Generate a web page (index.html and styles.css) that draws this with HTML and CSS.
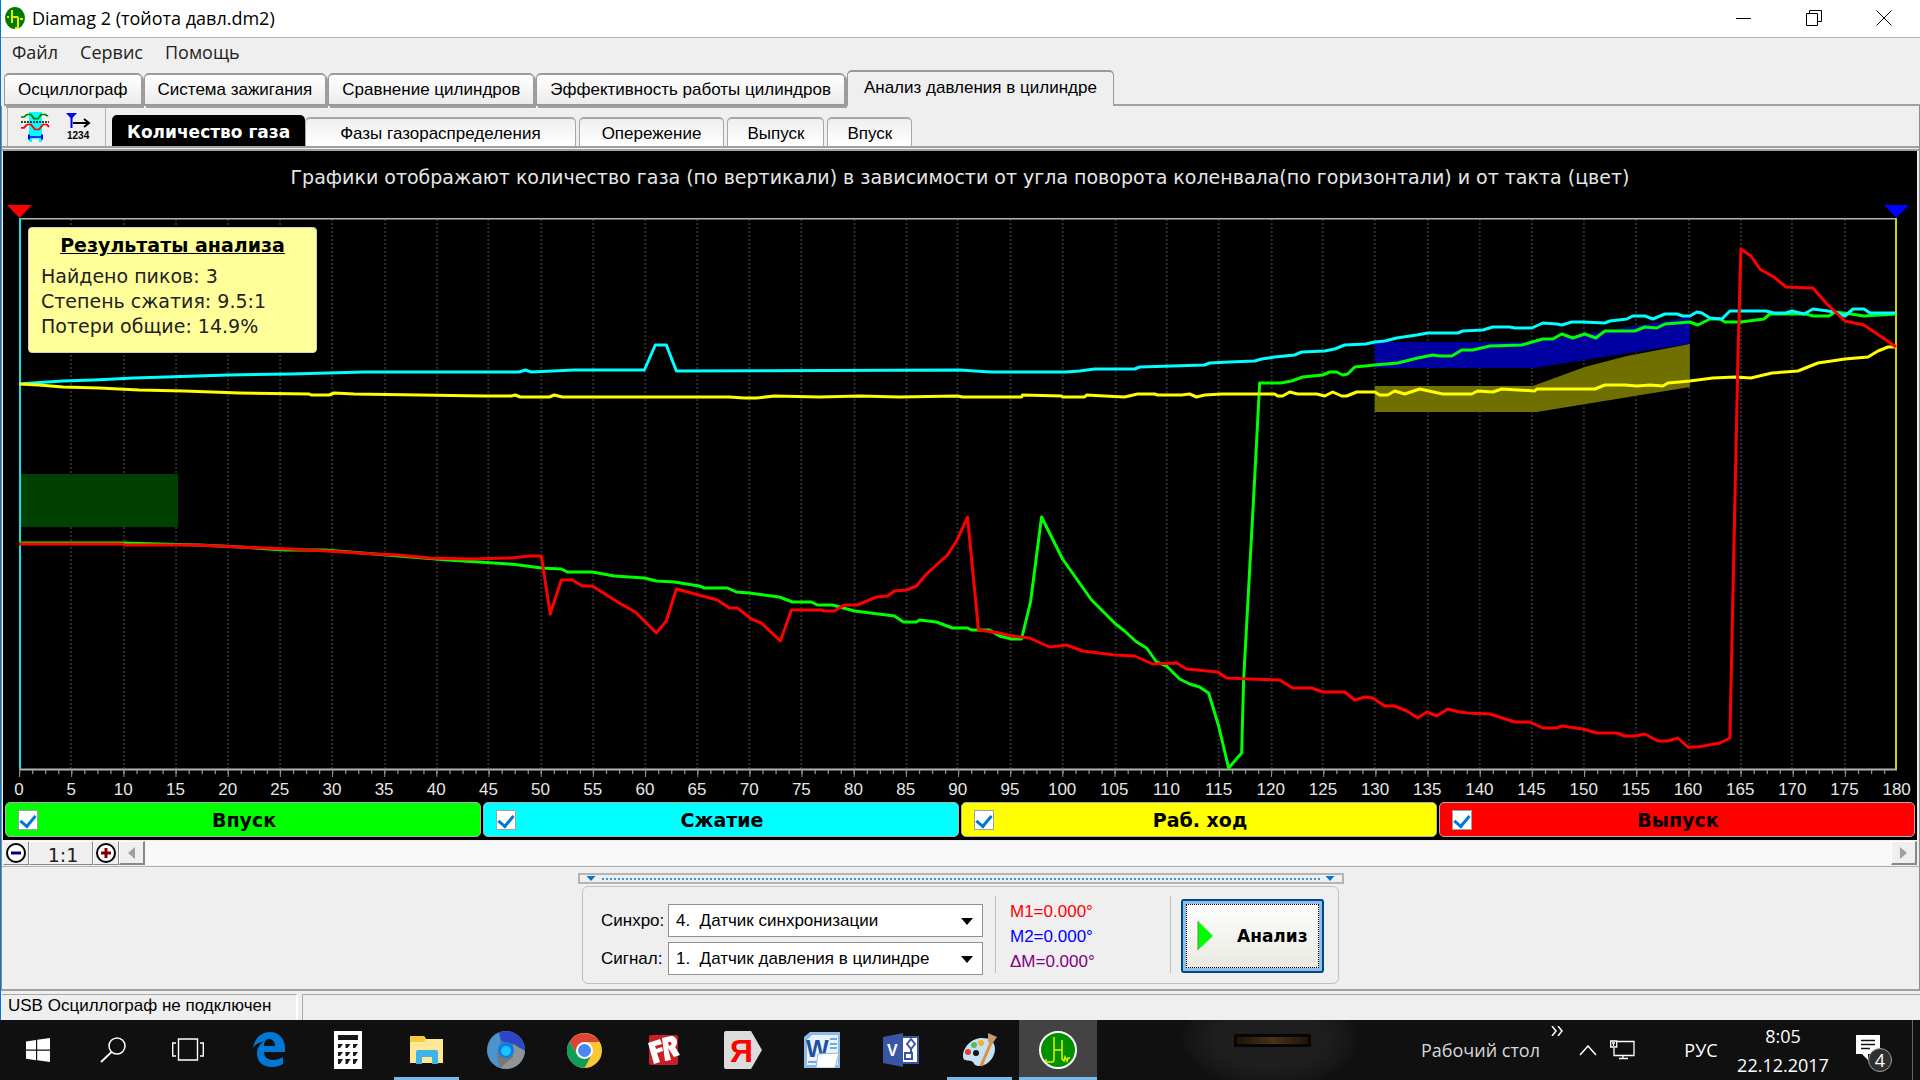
FILE: index.html
```html
<!DOCTYPE html>
<html lang="ru">
<head>
<meta charset="utf-8">
<title>Diamag 2 (тойота давл.dm2)</title>
<link rel="stylesheet" href="styles.css">
</head>
<body>
<div class="window">
  <header class="titlebar">
    <svg class="app-icon" width="22" height="24" viewBox="0 0 22 24"><ellipse cx="11" cy="12" rx="10" ry="11" fill="#007d00"/><path d="M3 11h2M8 4v13M8 11h5q1 0 1 1v10h-3M16 13h3" fill="none" stroke="#e8f000" stroke-width="2"/></svg>
    <h1 class="title">Diamag 2 (тойота давл.dm2)</h1>
    <div class="window-buttons">
      <button type="button" aria-label="Свернуть"><svg width="16" height="18" viewBox="0 0 16 18"><path d="M0 9.5h15" stroke="#000"/></svg></button>
      <button type="button" aria-label="Восстановить"><svg width="16" height="18" viewBox="0 0 16 18"><path d="M.5 4.500h11v12h-11zM3.500 4V1.500h12v11H12" fill="none" stroke="#000"/></svg></button>
      <button type="button" aria-label="Закрыть"><svg width="16" height="18" viewBox="0 0 16 18"><path d="M.5 1.500l15 15M15.500 1.500l-15 15" stroke="#000"/></svg></button>
    </div>
  </header>

  <nav class="menubar">
    <button type="button">Файл</button>
    <button type="button">Сервис</button>
    <button type="button">Помощь</button>
  </nav>

  <nav class="tabs">
    <button type="button" class="tab">Осциллограф</button>
    <button type="button" class="tab">Система зажигания</button>
    <button type="button" class="tab">Сравнение цилиндров</button>
    <button type="button" class="tab">Эффективность работы цилиндров</button>
    <button type="button" class="tab tab-active">Анализ давления в цилиндре</button>
    <div class="tabs-rest"></div>
  </nav>

  <main class="page">
    <div class="toolbar">
      <div class="tools">
        <button type="button" aria-label="Сравнение сигналов"><svg width="30" height="30" viewBox="0 0 30 36" preserveAspectRatio="none"><path d="M9 0h13v36h-3v-4H12v4H9z" fill="#0ff"/><path d="M1 6h3l3-3h4l3 5h4l3-5h4l3 2" fill="none" stroke="#008000" stroke-width="2"/><path d="M1 12h28" stroke="#000" stroke-width="2" stroke-dasharray="2 1"/><path d="M1 19h3l3-4h4l4 6h4l4-6h4l2 3" fill="none" stroke="red" stroke-width="2"/><path d="M9 30h13M9 27v6M22 27v6" stroke="#00f" stroke-width="2"/></svg></button>
        <button type="button" aria-label="Нумерация импульсов"><svg width="26" height="32" viewBox="0 0 26 32"><path d="M0 1h11l-5.500 6z" fill="#00f"/><path d="M5.500 5v11" stroke="#00f" stroke-width="2"/><path d="M7 11h15M18 7l5 4-5 4" fill="none" stroke="#000" stroke-width="2"/><text x="1" y="27" class="icon-digits">1234</text></svg></button>
      </div>
      <nav class="subtabs">
        <button type="button" class="subtab subtab-active">Количество газа</button>
        <button type="button" class="subtab subtab-wide">Фазы газораспределения</button>
        <button type="button" class="subtab subtab-medium">Опережение</button>
        <button type="button" class="subtab">Выпуск</button>
        <button type="button" class="subtab">Впуск</button>
      </nav>
    </div>

    <section class="chart">
      <p class="chart-caption">Графики отображают количество газа (по вертикали) в зависимости от угла поворота коленвала(по горизонтали) и от такта (цвет)</p>
      <div class="markers"><i class="marker marker-red"></i><i class="marker marker-blue"></i></div>
      <div class="plot">
        <svg class="plot-lines" viewBox="20 219 1877 559" preserveAspectRatio="none">
          <path class="grid" d="M72 220v550M125 220v550M177 220v550M229 220v550M281 220v550M333 220v550M386 220v550M438 220v550M489 220v550M542 220v550M594 220v550M646 220v550M698 220v550M750 220v550M802 220v550M855 220v550M907 220v550M958 220v550M1011 220v550M1063 220v550M1116 220v550M1167 220v550M1219 220v550M1272 220v550M1323 220v550M1375 220v550M1428 220v550M1480 220v550M1532 220v550M1584 220v550M1636 220v550M1689 220v550M1741 220v550M1792 220v550M1845 220v550"/>
          <path fill="#004000" d="M20 475h159v53H20z"/>
          <path fill="#0000a0" d="M1375 343h159l51-8 105-17v27l-55 8-50 8-50 8h-160z"/>
          <path fill="#707000" d="M1375 387h158l52-19 42-11 63-12v43l-153 25h-162z"/>
          <path class="frame" d="M20 219.500h1877M20 770.500h1877" />
          <path class="tick" stroke-width="4" pathLength="1440" stroke-dasharray="1 9" d="M20 773h1877"/>
          <path class="tick" stroke-width="8" pathLength="1800" stroke-dasharray="1 49" d="M20 774h1877"/>
          <path stroke="#00e5ee" stroke-width="2" d="M21 219v551"/>
          <path stroke="#d8d000" stroke-width="2" d="M1896 219v551"/>
          <polyline class="series" stroke="#0f0" points="20,544 124,544 160,545 200,546 241,548 286,551 326,551 400,557 449,561 510,565 520,566 542,569 562,570 568,573 593,573 615,577 645,579 657,582 675,583 700,587 705,589 728,589 737,593 750,594 780,598 793,603 812,603 818,606 833,606 855,612 895,617 904,623 917,623 920,621 937,623 953,629 968,629 972,631 990,631 1000,637 1012,640 1022,640 1031,603 1042,518 1063,560 1092,601 1116,625 1125,632 1137,643 1147,649 1157,663 1167,667 1180,680 1190,685 1200,688 1209,694 1219,727 1229,769 1242,754 1244,680 1255,480 1260,384 1281,384 1292,382 1303,378 1323,376 1330,373 1337,373 1343,376 1348,375 1355,368 1365,367 1375,366 1398,364 1418,359 1433,356 1440,357 1452,357 1462,351 1473,351 1490,347 1522,346 1543,340 1553,340 1562,335 1573,339 1585,335 1596,339 1605,332 1635,332 1645,328 1657,329 1665,325 1690,323 1698,326 1710,320 1720,320 1725,323 1741,323 1764,320 1770,315 1806,315 1813,317 1829,317 1835,313 1851,315 1864,317 1896,315"/>
          <polyline class="series" stroke="#0ff" points="20,385 33,384 64,382 95,381 135,379 167,378 229,376 292,375 365,373 520,373 526,371 532,373 575,371 645,371 656,346 667,346 677,372 960,371 991,373 1066,373 1080,372 1095,370 1135,370 1140,368 1172,367 1205,366 1210,364 1230,363 1255,362 1262,360 1275,358 1295,356 1302,353 1325,352 1335,350 1345,346 1366,345 1375,343 1385,342 1397,339 1417,336 1428,334 1458,334 1463,332 1483,331 1493,328 1510,328 1515,329 1532,329 1543,324 1557,325 1562,326 1572,323 1583,323 1605,324 1610,322 1627,320 1633,317 1645,317 1653,320 1665,315 1677,315 1683,317 1690,317 1697,313 1702,314 1710,319 1722,320 1730,312 1766,312 1774,314 1786,314 1792,312 1804,315 1813,310 1835,313 1845,317 1853,310 1864,310 1870,314 1896,314"/>
          <polyline class="series" stroke="#ff0" points="20,385 40,386 64,388 100,389 140,391 185,392 240,394 310,395 312,396 330,396 335,394 355,395 485,397 512,397 516,396 521,398 550,398 555,396 563,398 730,398 745,399 757,399 775,397 820,398 860,397 900,398 958,397 963,398 1022,398 1023,396 1062,397 1063,398 1085,398 1087,396 1105,397 1125,398 1138,395 1155,395 1158,396 1182,396 1190,395 1197,398 1205,396 1223,395 1275,395 1278,397 1283,397 1290,393 1298,395 1317,395 1325,397 1333,393 1342,397 1347,397 1357,393 1375,393 1380,396 1388,396 1395,392 1405,395 1420,390 1443,395 1472,395 1478,392 1493,393 1502,390 1535,392 1537,390 1595,390 1605,386 1625,386 1637,387 1650,386 1663,387 1668,384 1690,382 1713,379 1735,378 1751,379 1772,374 1798,372 1818,364 1845,360 1868,358 1878,352 1888,348 1896,348"/>
          <polyline class="series" stroke="red" points="20,545 124,545 125,546 197,546 240,548 290,550 345,553 375,555 400,556 430,559 470,560 512,559 530,557 542,557 551,615 562,581 573,581 583,587 593,587 620,604 636,613 657,634 667,622 677,590 718,601 730,609 738,609 752,620 762,624 781,642 792,611 822,611 825,612 835,612 845,606 858,606 877,598 888,597 895,592 907,591 917,587 927,575 948,556 957,542 968,518 979,631 1000,634 1012,637 1030,639 1050,648 1067,646 1083,652 1115,656 1135,657 1153,665 1177,664 1187,670 1218,673 1227,679 1250,680 1280,681 1293,689 1312,689 1323,693 1345,693 1355,701 1365,698 1373,699 1385,707 1395,707 1407,712 1418,719 1427,713 1437,717 1448,710 1460,713 1468,714 1490,715 1515,723 1530,723 1543,729 1557,729 1562,727 1583,730 1597,734 1617,734 1625,737 1635,737 1645,735 1658,742 1668,742 1678,739 1688,748 1698,748 1720,744 1730,739 1738,360 1741,250 1751,257 1760,270 1774,278 1786,288 1813,289 1827,305 1845,322 1864,326 1892,345 1896,348"/>
        </svg>
        <aside class="results">
          <h2>Результаты анализа</h2>
          <p>Найдено пиков: 3</p>
          <p>Степень сжатия: 9.5:1</p>
          <p>Потери общие: 14.9%</p>
        </aside>
      </div>
      <div class="scale">
        <span>0</span><span>5</span><span>10</span><span>15</span><span>20</span><span>25</span><span>30</span><span>35</span><span>40</span><span>45</span><span>50</span><span>55</span><span>60</span><span>65</span><span>70</span><span>75</span><span>80</span><span>85</span><span>90</span><span>95</span><span>100</span><span>105</span><span>110</span><span>115</span><span>120</span><span>125</span><span>130</span><span>135</span><span>140</span><span>145</span><span>150</span><span>155</span><span>160</span><span>165</span><span>170</span><span>175</span><span>180</span>
      </div>
      <div class="strokes">
        <label class="stroke stroke-intake"><input type="checkbox" checked><span>Впуск</span></label>
        <label class="stroke stroke-compression"><input type="checkbox" checked><span>Сжатие</span></label>
        <label class="stroke stroke-power"><input type="checkbox" checked><span>Раб. ход</span></label>
        <label class="stroke stroke-exhaust"><input type="checkbox" checked><span>Выпуск</span></label>
      </div>
    </section>

    <div class="zoombar">
      <button type="button" class="zoom-button" aria-label="Уменьшить"><svg width="20" height="20" viewBox="0 0 20 20"><circle cx="10" cy="10" r="9" fill="#fff" stroke="#000" stroke-width="2"/><path d="M5 10h10" stroke="#000080" stroke-width="3"/></svg></button>
      <button type="button" class="zoom-button zoom-reset">1:1</button>
      <button type="button" class="zoom-button" aria-label="Увеличить"><svg width="20" height="20" viewBox="0 0 20 20"><circle cx="10" cy="10" r="9" fill="#fff" stroke="#000" stroke-width="2"/><path d="M5 10h10M10 5v10" stroke="#800000" stroke-width="3"/></svg></button>
      <button type="button" class="scroll-button" aria-label="Влево"><svg width="7" height="12" viewBox="0 0 7 12"><path d="M7 0v12L0 6z" fill="#a0a0a0"/></svg></button>
      <div class="scroll-track"></div>
      <button type="button" class="scroll-button" aria-label="Вправо"><svg width="7" height="12" viewBox="0 0 7 12"><path d="M0 0v12l7-6z" fill="#a0a0a0"/></svg></button>
    </div>

    <section class="controls">
      <div class="splitter"><i></i><b></b><i></i></div>
      <div class="group">
        <div class="sources">
          <label for="sync">Синхро:</label>
          <div class="combo"><select id="sync"><option>4.&nbsp; Датчик синхронизации</option></select><i></i></div>
          <label for="signal">Сигнал:</label>
          <div class="combo"><select id="signal"><option>1.&nbsp; Датчик давления в цилиндре</option></select><i></i></div>
        </div>
        <div class="readouts">
          <span class="m1">M1=0.000°</span>
          <span class="m2">M2=0.000°</span>
          <span class="dm">ΔM=0.000°</span>
        </div>
        <button type="button" class="analyze"><svg width="16" height="30" viewBox="0 0 16 30"><path d="M1 0v29l15-14z" fill="#0f0"/><path d="M1 0v29" stroke="#5a8a5a"/></svg><span>Анализ</span></button>
      </div>
    </section>
  </main>

  <footer class="statusbar">
    <span class="status-text">USB Осциллограф не подключен</span>
    <span class="status-rest"></span>
  </footer>
</div>

<div class="taskbar">
  <button type="button" class="sys" aria-label="Пуск"><svg width="24" height="24" viewBox="0 0 24 24"><path d="M0 3.500l10-1.500v9.500H0zM11.200 1.800L24 0v11.500H11.200zM0 12.700h10v9.500L0 20.800zM11.200 12.700H24V24l-12.800-1.800z" fill="#fff"/></svg></button>
  <button type="button" class="sys" aria-label="Поиск"><svg width="26" height="26" viewBox="0 0 26 26"><circle cx="17" cy="9" r="8" fill="none" stroke="#fff" stroke-width="1.500"/><path d="M11.500 15L1 25" stroke="#fff" stroke-width="1.800"/></svg></button>
  <button type="button" class="sys" aria-label="Представление задач"><svg width="32" height="24" viewBox="0 0 32 24"><path d="M6.500 1h19v21h-19zM4 5H.7v13H4M28 5h3.300v13H28" fill="none" stroke="#fff" stroke-width="1.400"/></svg></button>
  <div class="apps">
    <button type="button" class="app" aria-label="Edge"><svg width="34" height="36" viewBox="0 0 34 36"><path d="M1 16C3 5 10 0 18 0c9 0 15 7 15 16v4H12c0 6 5 8 9 8 4 0 7-1 10-3v7c-3 2-7 3-11 3C11 35 5 30 5 21c0-5 3-9 7-12-5 1-9 4-11 7zm11-2h11c0-5-3-7-6-7-3 0-5 3-5 7z" fill="#0078d7"/></svg></button>
    <button type="button" class="app" aria-label="Калькулятор"><svg width="28" height="38" viewBox="0 0 28 38"><path d="M0 0h28v38H0z" fill="#fff"/><path d="M4 4h20v5H4z" fill="#181818"/><path d="M4 13h5l-3 4H4zM11.500 13h5l-3 4h-2zM19 13h5l-3 4h-2zM4 21h5l-3 4H4zM11.500 21h5l-3 4h-2zM19 21h5l-3 4h-2zM4 28h5l-3 5H4zM11.500 28h5l-3 5h-2zM19 28h5l-3 5h-2z" fill="#181818"/></svg></button>
    <button type="button" class="app app-running" aria-label="Проводник"><svg width="34" height="30" viewBox="0 0 34 30"><path d="M0 1h14l2 3h17v24H0z" fill="#ffe793"/><path d="M0 1h14l2 3-2 3H0z" fill="#f7c93c"/><path d="M6 29V17q0-2 2-2h18q2 0 2 2v12h-6v-7H12v7z" fill="#3cb4e7"/></svg></button>
    <button type="button" class="app" aria-label="Chromium"><svg width="38" height="38" viewBox="0 0 38 38"><circle cx="19" cy="19" r="19" fill="#777"/><path d="M12 1.500A19 19 0 0 0 13 37L10 24 14 10z" fill="#4b94cf"/><path d="M12 1.500A19 19 0 0 1 38 20L26 13 14 10z" fill="#2c48c8"/><path d="M38 20L26 13v13L13 37A19 19 0 0 0 38 20z" fill="#8f9499"/><circle cx="19" cy="19" r="8" fill="#0a7de8"/><circle cx="19" cy="20" r="5" fill="#19c4ff"/></svg></button>
    <button type="button" class="app" aria-label="Chrome"><svg width="35" height="35" viewBox="0 0 35 35"><circle cx="17.500" cy="17.500" r="17.500" fill="#fbc834"/><path d="M2.500 8.500a17.500 17.500 0 0 1 30 .5H17.500L10 21z" fill="#dc4437"/><path d="M2.500 8.500a17.500 17.500 0 0 0 15 26.500l7-13h-14z" fill="#0f9d58"/><circle cx="17.500" cy="17.500" r="8.500" fill="#fff"/><circle cx="17.500" cy="17.500" r="6.500" fill="#4b87f0"/></svg></button>
    <button type="button" class="app" aria-label="FineReader"><svg width="34" height="32" viewBox="0 0 34 32"><rect x="2" y="1" width="29" height="30" rx="2" fill="#c8202a"/><path d="M1 9l12-4 2 5-7 2 1 3 6-2 1 4-6 2 3 9-6 2zM15 4l9-2c6 0 8 7 4 11l5 8-6 2-6-9 3 12-6 1zm6 4l1 4c4-1 3-5-1-4z" fill="#fff"/></svg></button>
    <button type="button" class="app" aria-label="Яндекс"><svg width="38" height="38" viewBox="0 0 38 38"><path d="M2 0h25l11 19-11 19H2q-2 0-2-2V2q0-2 2-2z" fill="#dcdcdc"/><text x="6" y="31" class="logo-ya">Я</text></svg></button>
    <button type="button" class="app" aria-label="Word"><svg width="36" height="36" viewBox="0 0 36 36"><path d="M6 0h30v36H0V5z" fill="#8dbbe9"/><path d="M8 3h26v30H3V8z" fill="#e9f3fd"/><path d="M26 7h7M26 12h7M26 16h7M4 30h14" stroke="#7ba6d8" stroke-width="2"/><text x="2" y="25" class="logo-word">W</text><path d="M14 22l21-1-4 15H12z" fill="#fff" stroke="#9db4d0"/></svg></button>
    <button type="button" class="app" aria-label="Visio"><svg width="36" height="34" viewBox="0 0 36 34"><path d="M18 4h17v26H18z" fill="#fff" stroke="#3955a3" stroke-width="2"/><path d="M28 6l4 5-4 5-4-5zM22 20h7v6h-7zM28 16v4" fill="none" stroke="#3955a3" stroke-width="2"/><path d="M0 4l20-4v34L0 30z" fill="#3955a3"/><text x="4" y="23" class="logo-visio">V</text></svg></button>
    <button type="button" class="app app-running" aria-label="Paint"><svg width="36" height="36" viewBox="0 0 36 36"><path d="M20 6C9 6 1 16 1 24c0 6 5 4 8 5 4 1 2 5 8 5 9 0 16-9 16-17S27 6 20 6z" fill="#c4e2f3"/><circle cx="6" cy="20" r="3" fill="#e03c31"/><circle cx="12" cy="13" r="3" fill="#59b95b"/><circle cx="19" cy="11" r="3" fill="#f2b134"/><circle cx="14" cy="21" r="3" fill="#111"/><path d="M32 4L19 34" stroke="#e48d3a" stroke-width="3"/><path d="M26 1l9 4-5 7-4-2z" fill="#c79a6c"/></svg></button>
    <button type="button" class="app app-running app-active" aria-label="Diamag"><svg width="38" height="38" viewBox="0 0 38 38"><circle cx="19" cy="19" r="18" fill="#009000" stroke="#fff" stroke-width="2"/><path d="M7 28v3h7l1-2V6M15 19h8M23 9v19l2 2 1-4 2 4 1-3h2" fill="none" stroke="#e6f000" stroke-width="1.500"/></svg></button>
  </div>
  <div class="wallpaper"><i></i></div>
  <div class="tray">
    <button type="button" class="desktop-label">Рабочий стол</button>
    <button type="button" class="more" aria-label="Ещё"><svg width="12" height="10" viewBox="0 0 12 10"><path d="M1 0l4 5-4 5M7 0l4 5-4 5" fill="none" stroke="#fff" stroke-width="1.500"/></svg></button>
    <button type="button" aria-label="Скрытые значки"><svg width="18" height="11" viewBox="0 0 18 11"><path d="M1 10l8-9 8 9" fill="none" stroke="#fff" stroke-width="1.500"/></svg></button>
    <button type="button" class="network" aria-label="Сеть"><svg width="25" height="20" viewBox="0 0 25 20"><path d="M7 1.500h17v14H4V8M13 16v3M9 18.500h9M.7 1h6v6h-6zM2 3h3M3.500 3v3" fill="none" stroke="#fff" stroke-width="1.300"/></svg></button>
    <button type="button" class="lang">РУС</button>
    <button type="button" class="clock"><span>8:05</span><span>22.12.2017</span></button>
    <button type="button" class="notices" aria-label="Уведомления"><svg width="24" height="26" viewBox="0 0 24 26"><path d="M0 0h24v19H12l0 6-6-6H0z" fill="#fff"/><path d="M5 5.500h14M5 9.500h14M5 13.500h9" stroke="#111" stroke-width="1.300"/></svg><span class="badge">4</span></button>
  </div>
</div>
</body>
</html>
```
FILE: styles.css
```css
* { box-sizing: border-box; }

body {
  margin: 0;
  min-height: 100vh;
  display: flex;
  flex-direction: column;
  background: #efefef;
  color: #000;
  font: 17px/20px "Liberation Sans", sans-serif;
}

button {
  margin: 0;
  padding: 0;
  border: 0;
  background: none;
  color: inherit;
  font: inherit;
}

svg { display: block; }
h1, h2, p { margin: 0; font-weight: normal; }

.window {
  flex: 1;
  display: flex;
  flex-direction: column;
  border-left: 1px solid #0078d7;
}

/* Title bar and menu */
.titlebar {
  display: flex;
  align-items: center;
  height: 38px;
  padding: 0 18px 2px 3px;
  background: #fff;
  border-bottom: 1px solid #b4b4b4;
}
.title {
  flex: 1;
  margin-left: 6px;
  font: 18px/24px "Open Sans", sans-serif;
}
.window-buttons { display: flex; gap: 54px; padding-right: 10px; }

.menubar {
  display: flex;
  gap: 22px;
  height: 32px;
  padding: 1px 11px 5px;
  font: 18px/24px "Open Sans", sans-serif;
  color: #222;
}

/* Main tabs */
.tabs {
  display: flex;
  align-items: flex-end;
  height: 36px;
  padding-left: 3px;
}
.tab {
  height: 33px;
  margin-right: 2px;
  padding: 0 13px;
  border: 2px solid #9a9a9a;
  border-width: 2px 1px 2px 1px;
  border-radius: 5px 5px 0 0;
  background: linear-gradient(#fff, #ececec);
  white-space: nowrap;
  box-shadow: 2px 2px 0 #9f9f9f;
}
.tab-active {
  height: 36px;
  margin: 0;
  padding: 0 16px 2px;
  border-bottom: 0;
  background: #efefef;
  box-shadow: none;
}
.tabs-rest { flex: 1; border-bottom: 2px solid #a0a0a0; }

.page {
  flex: 1;
  display: flex;
  flex-direction: column;
  border: 1px solid #8c8c8c;
  border-top: 0;
  border-bottom: 2px solid #a0a0a0;
}

/* Toolbar and inner tabs */
.toolbar {
  display: flex;
  align-items: stretch;
  height: 45px;
  padding: 2px 0 0 5px;
  border-bottom: 5px double #a0a0a0;
}
.tools {
  display: flex;
  gap: 16px;
  width: 99px;
  padding: 4px 0 0 12px;
  border: 1px solid #b0b0b0;
  border-width: 0 1px;
}
.tools button { align-self: flex-start; }
.icon-digits { font: bold 10px "Liberation Sans", sans-serif; }
.subtabs {
  display: flex;
  align-items: flex-end;
  padding-left: 6px;
}
.subtab {
  height: 29px;
  margin-right: 3px;
  padding: 2px 19px 0;
  border: 1px solid #a8a8a8;
  border-width: 2px 1px 0;
  border-radius: 5px 5px 0 0;
  background: linear-gradient(#efefef, #fff);
  white-space: nowrap;
}
.subtab-wide { padding: 2px 34px 0; }
.subtab-medium { padding: 2px 22px 0; }
.subtab-active {
  height: 31px;
  margin: 0;
  padding: 2px 15px 0;
  border: 0;
  background: #000;
  color: #fff;
  font: bold 17px/20px "DejaVu Sans", sans-serif;
}

/* Chart */
.chart {
  flex: 1;
  display: flex;
  flex-direction: column;
  margin: 0 2px 0 1px;
  background: #000;
  color: #e6e6e6;
}
.chart-caption {
  padding: 14px 0 16px;
  text-align: center;
  font: 19px/24px "DejaVu Sans", sans-serif;
}
.markers {
  display: flex;
  justify-content: space-between;
  padding: 0 8px 0 4px;
}
.marker {
  width: 25px;
  height: 13px;
  clip-path: polygon(0 0, 100% 0, 50% 100%);
}
.marker-red { background: red; }
.marker-blue { background: #00f; }
.plot {
  flex: 1;
  display: flex;
  position: relative;
  min-height: 300px;
  margin: 0 20px 0 16px;
}
.plot-lines { flex: 1; width: 100%; height: 100%; position: absolute; }
.grid {
  fill: none;
  stroke: #2c2c2c;
  stroke-width: 2;
  stroke-dasharray: 2 2;
}
.frame { stroke: #b4b4b4; stroke-width: 2; }
.tick { stroke: #909090; }
.series {
  fill: none;
  stroke-width: 3;
  stroke-linejoin: round;
}
.results {
  position: absolute;
  left: 9px;
  top: 9px;
  width: 289px;
  height: 126px;
  padding: 5px 12px;
  border: 1px solid #d0d0d0;
  border-radius: 4px;
  background: #ffff99;
  color: #222;
  font: 19px/25px "DejaVu Sans", sans-serif;
}
.results h2 {
  margin-bottom: 6px;
  color: #000;
  font-size: 19px;
  font-weight: bold;
  text-align: center;
  text-decoration: underline;
}
.scale {
  display: flex;
  justify-content: space-between;
  margin: 3px 20px 2px 16px;
  height: 20px;
}
.scale span {
  width: 0;
  display: flex;
  justify-content: center;
}
.strokes {
  display: grid;
  grid-template-columns: repeat(4, 1fr);
  gap: 2px;
  padding: 0 2px 3px;
}
.stroke {
  display: flex;
  align-items: center;
  height: 35px;
  padding: 0 12px;
  border: 1px solid #b0b0b0;
  border-radius: 5px;
  color: #000;
  font: bold 19px/24px "DejaVu Sans", sans-serif;
}
.stroke span { flex: 1; text-align: center; margin-right: 18px; }
.stroke-intake { background: #0f0; }
.stroke-compression { background: #0ff; }
.stroke-power { background: #ff0; }
.stroke-exhaust { background: red; }
.stroke input {
  appearance: none;
  display: flex;
  justify-content: center;
  width: 20px;
  height: 20px;
  margin: 0;
  border: 1px solid #a0a0a0;
  background: #fff;
}
.stroke input:checked::before {
  content: "";
  width: 7px;
  height: 12px;
  margin-top: 1px;
  border: solid #0078d7;
  border-width: 0 3px 3px 0;
  transform: rotate(40deg);
}

/* Zoom and scroll row */
.zoombar {
  display: flex;
  height: 27px;
  padding: 1px 2px 1px 1px;
  border-bottom: 1px solid #b0b0b0;
}
.zoom-button, .scroll-button {
  display: flex;
  align-items: center;
  justify-content: center;
  width: 26px;
  border: 1px solid #fff;
  border-right-color: #888;
  border-bottom-color: #888;
  background: #efefef;
}
.zoom-reset {
  width: 64px;
  padding: 4px 0 0 4px;
  font: 19px/20px "DejaVu Sans", sans-serif;
  color: #222;
}
.scroll-button { width: 26px; border-right-width: 2px; border-bottom-width: 2px; }
.scroll-track { flex: 1; background: #f8f8f8; }

/* Control panel */
.controls {
  display: flex;
  flex-direction: column;
  align-items: center;
  padding: 6px 0 5px;
}
.splitter {
  display: flex;
  align-items: center;
  gap: 6px;
  width: 766px;
  height: 11px;
  padding: 0 7px;
  border: 2px solid #b4b4b4;
}
.splitter i {
  width: 9px;
  height: 5px;
  background: #0078d7;
  clip-path: polygon(0 0, 100% 0, 50% 100%);
}
.splitter b { flex: 1; border-top: 2px dotted #3a95dd; }
.group {
  display: flex;
  align-items: flex-start;
  width: 757px;
  height: 98px;
  margin-top: 2px;
  padding: 9px 14px 0 18px;
  border: 1px solid #c0c0c0;
  border-radius: 6px;
}
.sources {
  display: grid;
  grid-template-columns: 67px 315px;
  gap: 5px 0;
  align-items: center;
  padding-top: 8px;
}
.combo { position: relative; }
.combo select {
  appearance: none;
  display: block;
  width: 100%;
  height: 33px;
  padding: 0 7px;
  border: 1px solid #8f8f8f;
  border-radius: 0;
  background: #fff;
  color: #000;
  font: inherit;
}
.combo i {
  position: absolute;
  right: 10px;
  top: 14px;
  width: 12px;
  height: 7px;
  background: #000;
  clip-path: polygon(0 0, 100% 0, 50% 100%);
  pointer-events: none;
}
.readouts {
  display: flex;
  flex-direction: column;
  width: 176px;
  height: 77px;
  margin-left: 12px;
  padding: 3px 14px;
  border: 1px solid #c0c0c0;
  border-width: 0 1px;
  line-height: 25px;
}
.m1 { color: red; }
.m2 { color: #00f; }
.dm { color: #800080; }
.analyze {
  display: flex;
  align-items: center;
  gap: 24px;
  width: 143px;
  height: 74px;
  margin: 3px 0 0 10px;
  border: 2px solid #00468c;
  border-radius: 3px;
  outline: 1px dotted #000;
  outline-offset: -6px;
  background: linear-gradient(#fff, #e9e8e0);
  box-shadow: inset 0 0 0 3px #8fbfe8;
  font: bold 17px/20px "DejaVu Sans", sans-serif;
}
.group .analyze { padding-left: 14px; }

/* Status bar */
.statusbar {
  display: flex;
  gap: 4px;
  height: 27px;
  margin-top: 2px;
  padding: 1px 0 0 1px;
}
.status-text {
  width: 296px;
  padding: 1px 6px;
  border-top: 1px solid #a8a8a8;
  border-right: 2px solid #fff;
}
.status-rest { flex: 1; border: 1px solid #a8a8a8; border-width: 1px 0 0 1px; }

/* Taskbar */
.taskbar {
  display: flex;
  height: 60px;
  background: #101010;
  color: #fff;
  font: 18px/24px "Open Sans", sans-serif;
}
.taskbar button {
  display: flex;
  align-items: center;
  justify-content: center;
}
.sys { width: 75px; }
.apps { display: flex; margin-left: 4px; }
.app { width: 79px; }
.taskbar .app-running {
  width: 65px;
  margin: 0 7px;
  border: solid transparent;
  border-width: 3px 0;
  border-bottom-color: #76b9ed;
}
.taskbar .app-active { width: 78px; margin: 0; background: #434343; }
.logo-ya { font: bold 32px "Liberation Sans", sans-serif; fill: red; }
.logo-word { font: bold 24px "Liberation Sans", sans-serif; fill: #1f4fa0; }
.logo-visio { font: bold 16px "Liberation Sans", sans-serif; fill: #fff; }
.wallpaper {
  flex: 1;
  padding: 14px 0 0 137px;
  background: radial-gradient(90px 50px at 173px 18px, #1e1e1e 60%, #161616 90%, transparent);
}
.wallpaper i {
  display: block;
  width: 77px;
  height: 13px;
  border: 3px solid #060606;
  background: linear-gradient(90deg, #20140a, #4a3212, #20140a);
}
.tray { display: flex; padding-right: 7px; }
.desktop-label { color: #d8d8d8; }
.tray .more { align-self: flex-start; margin: 6px 16px 0 11px; }
.network { width: 50px; }
.tray .lang { width: 74px; padding-left: 34px; }
.taskbar .clock { flex-direction: column; width: 124px; gap: 5px; }
.tray .notices {
  position: relative;
  width: 68px;
  padding: 0 22px 4px 0;
  border-right: 1px solid #666;
}
.badge {
  position: absolute;
  left: 23px;
  top: 28px;
  width: 24px;
  height: 24px;
  border: 1px solid #a0a0a0;
  border-radius: 12px;
  background: #303030;
  line-height: 22px;
  text-align: center;
}
```
